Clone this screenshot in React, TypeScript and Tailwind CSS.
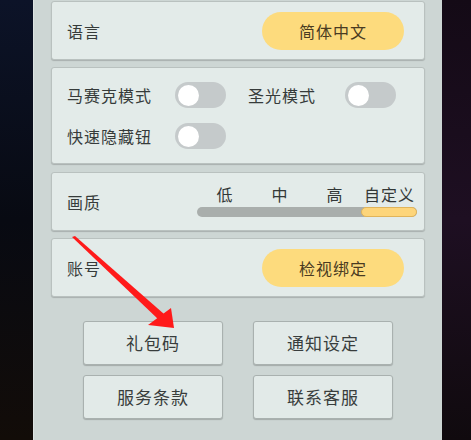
import React from "react";

const font = { fontFamily: '"Noto Sans CJK SC", "Noto Sans", sans-serif' };

function Toggle() {
  return (
    <div className="w-[51px] h-[26px] rounded-full bg-[#c5cacb] flex items-center pl-[3px] shrink-0">
      <div className="w-[21px] h-[21px] rounded-full bg-white" />
    </div>
  );
}

function Card({ className = "", children }: { className?: string; children: React.ReactNode }) {
  return (
    <div
      className={
        "bg-[#e3ebe9] border border-[#b9c1bf] rounded-[3px] shadow-[0_1px_1px_rgba(0,0,0,0.18)] " + className
      }
    >
      {children}
    </div>
  );
}

function YellowButton({ text }: { text: string }) {
  return (
    <div className="w-[142px] h-[38px] rounded-full bg-[#fddb7d] flex items-center justify-center text-[16px] tracking-[1px] text-[#4a3b22]">
      {text}
    </div>
  );
}

function GrayButton({ text }: { text: string }) {
  return (
    <div className="w-[140px] h-[44px] bg-[#e2eae8] border border-[#a9b1af] rounded-[3px] shadow-[0_1px_1px_rgba(0,0,0,0.2)] flex items-center justify-center text-[17px] tracking-[1px] text-[#383d3c]">
      {text}
    </div>
  );
}

export default function App() {
  return (
    <div className="relative w-[471px] h-[440px] flex overflow-hidden bg-black" style={font}>
      <div className="w-[33px] h-full bg-gradient-to-b from-[#0c1328] via-[#080a12] to-[#120c08]" />
      <div className="w-[409px] h-full bg-[#cdd6d4] border-l border-[#dde4e2] pl-[17px] pr-[17px] pt-[1px] flex flex-col text-[#363b3a]">
        <Card className="h-[59px] flex items-center justify-between pl-[15px] pr-[20px]">
          <span className="text-[16px] tracking-[1px]">语言</span>
          <YellowButton text="简体中文" />
        </Card>
        <Card className="mt-[7px] h-[97px] flex flex-col justify-center gap-[15px] pl-[15px]">
          <div className="flex items-center">
            <span className="w-[108px] text-[16px] tracking-[1px]">马赛克模式</span>
            <Toggle />
            <span className="ml-[22px] w-[97px] text-[16px] tracking-[1px]">圣光模式</span>
            <Toggle />
          </div>
          <div className="flex items-center">
            <span className="w-[108px] text-[16px] tracking-[1px]">快速隐藏钮</span>
            <Toggle />
          </div>
        </Card>
        <Card className="mt-[8px] h-[59px] flex items-center justify-between pl-[15px] pr-[7px]">
          <span className="text-[16px] tracking-[1px] mt-[1px]">画质</span>
          <div className="w-[220px] flex flex-col gap-[3px] -mt-[3px]">
            <div className="grid grid-cols-4 text-[16px] leading-[20px] text-[#333837]">
              <span className="text-center">低</span>
              <span className="text-center">中</span>
              <span className="text-center">高</span>
              <span className="text-center tracking-[1px]">自定义</span>
            </div>
            <div className="h-[10px] rounded-full bg-[#a9aeac] flex justify-end">
              <div className="w-[56px] h-[10px] rounded-full bg-[#fdd57a] border border-[#e0b45a]" />
            </div>
          </div>
        </Card>
        <Card className="mt-[7px] h-[59px] flex items-center justify-between pl-[15px] pr-[20px]">
          <span className="text-[16px] tracking-[1px]">账号</span>
          <YellowButton text="检视绑定" />
        </Card>
        <div className="mt-[24px] grid grid-cols-[140px_140px] gap-x-[30px] gap-y-[10px] justify-center">
          <GrayButton text="礼包码" />
          <GrayButton text="通知设定" />
          <GrayButton text="服务条款" />
          <GrayButton text="联系客服" />
        </div>
      </div>
      <div className="flex-1 h-full bg-gradient-to-b from-[#140a16] via-[#1e0f22] to-[#100a0e]" />
      <svg className="absolute left-0 top-0 pointer-events-none" width="471" height="440">
        <polygon points="72,237 75,236 164,314 159,320" fill="#ff1a1a" />
        <polygon points="174,328 148,325 171,308" fill="#ff1a1a" />
      </svg>
    </div>
  );
}
